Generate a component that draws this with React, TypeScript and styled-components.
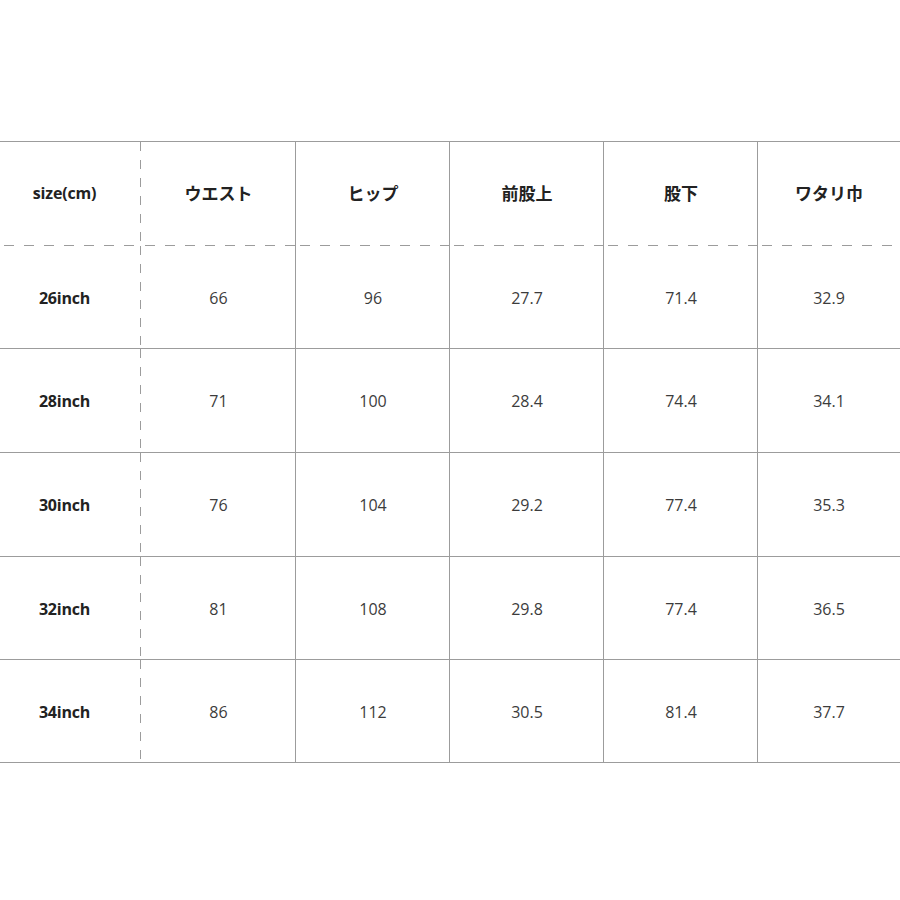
import React from 'react';
import styled, { createGlobalStyle } from 'styled-components';

const GlobalStyle = createGlobalStyle`
  html, body {
    margin: 0;
    padding: 0;
    background: #fff;
  }
  body {
    font-family: 'Open Sans', 'Noto Sans CJK JP', sans-serif;
  }
`;

type Line = 'solid' | 'dashed' | 'none';

const LINE = '#9c9c9c';

const lineImage = (side: 'right' | 'bottom', kind: Line) => {
  if (kind === 'none') return null;
  if (side === 'right') {
    return kind === 'solid'
      ? { img: `linear-gradient(${LINE}, ${LINE})`, size: '1px 100%', pos: 'right top', rep: 'no-repeat' }
      : { img: `linear-gradient(to bottom, ${LINE} 0 9px, transparent 9px 18px)`, size: '1px 18px', pos: 'right top', rep: 'repeat-y' };
  }
  return kind === 'solid'
    ? { img: `linear-gradient(${LINE}, ${LINE})`, size: '100% 1px', pos: 'left bottom', rep: 'no-repeat' }
    : { img: `linear-gradient(to right, ${LINE} 0 10px, transparent 10px 20px)`, size: '20px 1px', pos: '4px bottom', rep: 'repeat-x' };
};

const lines = (right: Line, bottom: Line) => {
  const parts = [lineImage('right', right), lineImage('bottom', bottom)].filter(Boolean) as {
    img: string; size: string; pos: string; rep: string;
  }[];
  if (!parts.length) return '';
  return `
    background-image: ${parts.map(p => p.img).join(', ')};
    background-size: ${parts.map(p => p.size).join(', ')};
    background-position: ${parts.map(p => p.pos).join(', ')};
    background-repeat: ${parts.map(p => p.rep).join(', ')};
  `;
};

const Page = styled.div`
  width: 900px;
  height: 900px;
  padding-top: 141px;
  box-sizing: border-box;
`;

const Table = styled.div`
  display: grid;
  grid-template-columns: 141px 155px 154px 154px 154px 142px;
  grid-template-rows: 104px 103px 104px 104px 103px 103px;
  border-top: 1px solid ${LINE};
`;

const Cell = styled.div<{ $right: Line; $bottom: Line; $head?: boolean; $label?: boolean }>`
  display: flex;
  align-items: center;
  justify-content: center;
  padding-right: ${p => (p.$label ? '12px' : '0')};
  padding-bottom: ${p => (p.$head ? '3px' : '0')};
  font-size: ${p => (p.$head && !p.$label ? '17px' : '16px')};
  font-weight: ${p => (p.$head || p.$label ? 700 : 400)};
  color: ${p => (p.$head || p.$label ? '#222' : '#3c3c3c')};
  letter-spacing: ${p => (p.$label ? '-0.2px' : '0')};
  ${p => lines(p.$right, p.$bottom)}
`;

const headers = ['size(cm)', 'ウエスト', 'ヒップ', '前股上', '股下', 'ワタリ巾'];

const rows: string[][] = [
  ['26inch', '66', '96', '27.7', '71.4', '32.9'],
  ['28inch', '71', '100', '28.4', '74.4', '34.1'],
  ['30inch', '76', '104', '29.2', '77.4', '35.3'],
  ['32inch', '81', '108', '29.8', '77.4', '36.5'],
  ['34inch', '86', '112', '30.5', '81.4', '37.7'],
];

const rightLine = (col: number): Line => (col === 0 ? 'dashed' : col === 5 ? 'none' : 'solid');

export default function App() {
  return (
    <>
      <GlobalStyle />
      <Page>
        <Table>
          {headers.map((h, c) => (
            <Cell key={h} $head $label={c === 0} $right={rightLine(c)} $bottom="dashed">
              {h}
            </Cell>
          ))}
          {rows.map(row =>
            row.map((v, c) => (
              <Cell key={row[0] + c} $label={c === 0} $right={rightLine(c)} $bottom="solid">
                {v}
              </Cell>
            ))
          )}
        </Table>
      </Page>
    </>
  );
}
